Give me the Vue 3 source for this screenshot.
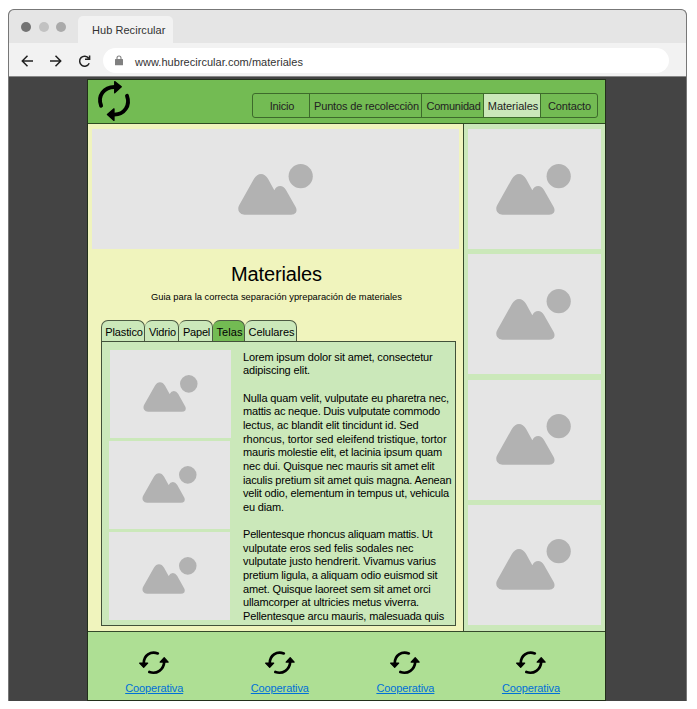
<script setup>
import { h } from 'vue'

const nav = [
  { label: 'Inicio', w: 24.5, cell: 57 },
  { label: 'Puntos de recolecciòn', w: 105, cell: 112 },
  { label: 'Comunidad', w: 54, cell: 62 },
  { label: 'Materiales', w: 50.5, cell: 57, active: true },
  { label: 'Contacto', w: 43, cell: 57 },
]
const tabs = [
  { label: 'Plastico', w: 37.5, cell: 44 },
  { label: 'Vidrio', w: 27, cell: 34 },
  { label: 'Papel', w: 27, cell: 34 },
  { label: 'Telas', w: 26, cell: 32, active: true },
  { label: 'Celulares', w: 46, cell: 52 },
]
const lines = [
  ['Lorem ipsum dolor sit amet, consectetur', 189.5],
  ['adipiscing elit.', 67],
  ['', 0],
  ['Nulla quam velit, vulputate eu pharetra nec,', 206],
  ['mattis ac neque. Duis vulputate commodo', 197],
  ['lectus, ac blandit elit tincidunt id. Sed', 175.5],
  ['rhoncus, tortor sed eleifend tristique, tortor', 203.5],
  ['mauris molestie elit, et lacinia ipsum quam', 199],
  ['nec dui. Quisque nec mauris sit amet elit', 191.5],
  ['iaculis pretium sit amet quis magna. Aenean', 208.5],
  ['velit odio, elementum in tempus ut, vehicula', 206],
  ['eu diam.', 41],
  ['', 0],
  ['Pellentesque rhoncus aliquam mattis. Ut', 189.5],
  ['vulputate eros sed felis sodales nec', 170.5],
  ['vulputate justo hendrerit. Vivamus varius', 193],
  ['pretium ligula, a aliquam odio euismod sit', 194.5],
  ['amet. Quisque laoreet sem sit amet orci', 187.5],
  ['ullamcorper at ultricies metus viverra.', 176],
  ['Pellentesque arcu mauris, malesuada quis', 201],
]

// Spreads the letters of a one-line label so that it fills the given width.
const vFit = {
  mounted(el, { value }) {
    const n = el.textContent.length
    if (!n || !value) return
    const natural = el.getBoundingClientRect().width
    el.style.letterSpacing = `${(value - natural) / n}px`
  },
}

const Mountains = () =>
  h('svg', { viewBox: '0 0 75 51', fill: '#b2b2b2' }, [
    h('path', { d: 'M6.5 50.8Q3 50.8 1.2 48Q-.6 45 1 41.5L16 14.8Q19 10 23 10Q27 10 30 14.8L36.3 26.2Q38.5 22 42.2 22Q45.6 22 48 26L57.8 43.3Q59.3 46.5 57.8 48.8Q56.3 50.8 53 50.8Z' }),
    h('circle', { cx: 62.7, cy: 12.2, r: 12.1 }),
  ])
</script>

<template>
  <div class="window">
    <div class="tabbar">
      <i class="dot d1"></i><i class="dot d2"></i><i class="dot d3"></i>
      <div class="browser-tab"><span v-fit="73.5">Hub Recircular</span></div>
    </div>
    <div class="toolbar">
      <svg class="arrows" viewBox="0 0 72 16" fill="none" stroke="#222" stroke-width="1.5">
        <path d="M12 8H1.5M6.5 2.8L1.3 8L6.5 13.2" />
        <path d="M29 8H39.5M34.5 2.8L39.7 8L34.5 13.2" />
        <path d="M67.7 5.2A5 5 0 1 0 68.2 10.2M68.6 2.4V6.3H64" />
      </svg>
      <div class="address">
        <svg class="lock" viewBox="0 0 8 11">
          <path d="M2 5V3a2 2 0 0 1 4 0V5" fill="none" stroke="#808080" stroke-width="1.1" />
          <rect y="4" width="8" height="6.3" rx=".5" fill="#808080" />
        </svg>
        <span v-fit="168">www.hubrecircular.com/materiales</span>
      </div>
    </div>
    <div class="viewport">
      <div class="page">
        <header>
          <svg class="logo" viewBox="0 0 36 44" fill="none" stroke="#000" stroke-width="3.9" stroke-linecap="round">
            <path d="M5.1 26.8C1.2 16.5 8 8.2 18.5 8" />
            <path d="M18.7 2.6L25.3 7.8L18.7 13.7Z" fill="#000" stroke-width="1.3" stroke-linejoin="round" />
            <path d="M31 16.8C34.5 26.5 28.5 35.4 18.3 35.6" />
            <path d="M18 29.8L11.4 35.5L18 41.4Z" fill="#000" stroke-width="1.3" stroke-linejoin="round" />
          </svg>
          <nav>
            <a v-for="n in nav" :key="n.label" :class="{ active: n.active }" :style="{ width: n.cell + 'px' }">
              <span v-fit="n.w">{{ n.label }}</span>
            </a>
          </nav>
        </header>
        <div class="columns">
          <main>
            <div class="ph hero"><Mountains /></div>
            <h1><span v-fit="91">Materiales</span></h1>
            <p class="subtitle"><span v-fit="251">Guia para la correcta separación ypreparación de materiales</span></p>
            <div class="tabs">
              <div v-for="t in tabs" :key="t.label" class="tab" :class="{ active: t.active }" :style="{ width: t.cell + 'px' }">
                <span v-fit="t.w">{{ t.label }}</span>
              </div>
            </div>
            <section class="panel">
              <div class="thumbs">
                <div v-for="i in 3" :key="i" class="ph thumb"><Mountains /></div>
              </div>
              <div class="copy">
                <div v-for="(l, i) in lines" :key="i" class="line"><span v-fit="l[1]">{{ l[0] }}</span></div>
              </div>
            </section>
          </main>
          <aside>
            <div v-for="i in 4" :key="i" class="ph side"><Mountains /></div>
          </aside>
        </div>
        <footer>
          <div v-for="i in 4" :key="i" class="coop">
            <svg viewBox="0 0 32 25" fill="none" stroke="#000" stroke-width="2.7" stroke-linecap="round">
              <path d="M19.8 3.4C12.5 .8 5.8 5.3 5.8 13" />
              <path d="M1.6 13.1H9.7L5.7 17.4Z" fill="#000" stroke-width="1.2" stroke-linejoin="round" />
              <path d="M11.4 22C18.8 24.6 25.8 19.5 26.2 12" />
              <path d="M22.1 12.1H30.2L26.2 7.7Z" fill="#000" stroke-width="1.2" stroke-linejoin="round" />
            </svg>
            <a><span v-fit="58">Cooperativa</span></a>
          </div>
        </footer>
      </div>
    </div>
  </div>
</template>

<style>
body { background: #fff; }
#app { display: flow-root; }
</style>

<style scoped>
* { box-sizing: border-box; }
.window {
  width: 679px; height: 692px; margin: 9px 0 0 8px;
  border: 1px solid #777; border-bottom: 0; border-radius: 6px 6px 0 0;
  overflow: hidden; background: #444;
  font: 11px/14px "Liberation Sans", Arial, sans-serif; color: #000;
}
span { display: inline-block; white-space: pre; }
svg { display: block; }
.tabbar { height: 33px; background: #e5e5e5; display: flex; align-items: center; padding-left: 12px; }
.dot { width: 10px; height: 10px; border-radius: 50%; margin: 0 7.7px 0 0; flex: none; }
.d1 { background: #737373; }
.d2 { background: #c2c2c2; }
.d3 { background: #aaa; margin-right: 12px; }
.browser-tab {
  width: 95px; height: 27px; align-self: flex-end; background: #f2f2f2;
  border-radius: 5px 5px 0 0; padding: 7px 0 0 13.6px; color: #333;
}
.toolbar { height: 34px; background: #f2f2f2; border-bottom: 1px solid #888; display: flex; align-items: center; padding-left: 12px; }
.arrows { width: 72px; height: 16px; margin-top: 2px; }
.address { margin: 1px 0 0 10px; width: 566px; height: 25px; border-radius: 13px; background: #fff; display: flex; align-items: center; padding-left: 12px; color: #333; }
.address span { padding-top: 3px; }
.lock { width: 8px; height: 11px; margin-right: 12px; }
.viewport { padding: 2px 0 0 78px; }
.page { width: 519px; height: 622px; border: 1px solid #222f1b; display: flex; flex-direction: column; }
header { height: 44px; flex: none; background: #73bb53; border-bottom: 1px solid #2d4a21; display: flex; padding-left: 8px; }
.logo { width: 36px; height: 44px; margin-top: -1px; }
nav { display: flex; margin: 13px 0 0 120px; height: 25px; width: 346px; border: 1px solid #3d6a2b; border-radius: 3px; color: #222; }
nav a { display: flex; justify-content: center; align-items: center; flex: none; border-right: 1px solid #3d6a2b; padding: 1px 0 0 2px; }
nav a:last-child { border-right: 0; padding-left: 0; }
nav .active { background: #cbe8ba; }
.columns { display: flex; height: 508px; flex: none; border-bottom: 1px solid #35492b; }
main { width: 376px; background: #f0f4bd; border-right: 1px solid #35492b; padding: 5px 0 0 4px; }
.ph { background: #e5e5e5; display: flex; align-items: center; justify-content: center; }
.ph svg { width: 75px; height: 51px; }
.hero { width: 367px; height: 120px; }
h1 { margin: 13px 0 0 1px; width: 367px; text-align: center; font-size: 20px; line-height: 24px; font-weight: 400; }
.subtitle { margin: 4px 0 0 1px; width: 367px; text-align: center; font-size: 9.33px; line-height: 14px; }
.tabs { display: flex; margin: 16px 0 0 9px; height: 21px; }
.tab {
  border: 1px solid #4c5a43; border-left-width: 0; border-bottom: 0; border-radius: 7px 7px 0 0; background: #cbe8ba;
  display: flex; justify-content: center; padding: 4px 0 0 2px; flex: none;
}
.tab:first-child { border-left-width: 1px; }
.tab.active { background: #73bb53; }
.panel { margin-left: 9px; width: 355px; height: 285px; border: 1px solid #42513a; background: #cbe8ba; display: flex; padding: 8px 0 0 7px; overflow: hidden; }
.thumbs { display: flex; flex-direction: column; gap: 3.5px; width: 122px; flex: none; }
.thumb { width: 121px; height: 87.5px; flex: none; }
.thumb:first-child { margin-left: 1px; }
.thumb svg { width: 55px; height: 37px; }
.copy { margin: .6px 0 0 12px; }
.line { height: 13.66px; line-height: 13.66px; }
aside { flex: 1; background: #cbe8ba; padding: 5px 0 0 4px; display: flex; flex-direction: column; gap: 5.3px; }
.side { width: 133px; height: 120px; flex: none; }
.side svg { margin-left: -2px; }
footer { flex: 1; background: #aedf94; display: flex; padding-left: 3.4px; }
.coop { width: 125.6px; display: flex; flex-direction: column; align-items: center; padding-top: 18px; }
.coop svg { width: 32px; height: 25px; }
.coop a { margin-top: 6px; color: #0070d8; }
.coop span { text-decoration: underline; }
</style>
